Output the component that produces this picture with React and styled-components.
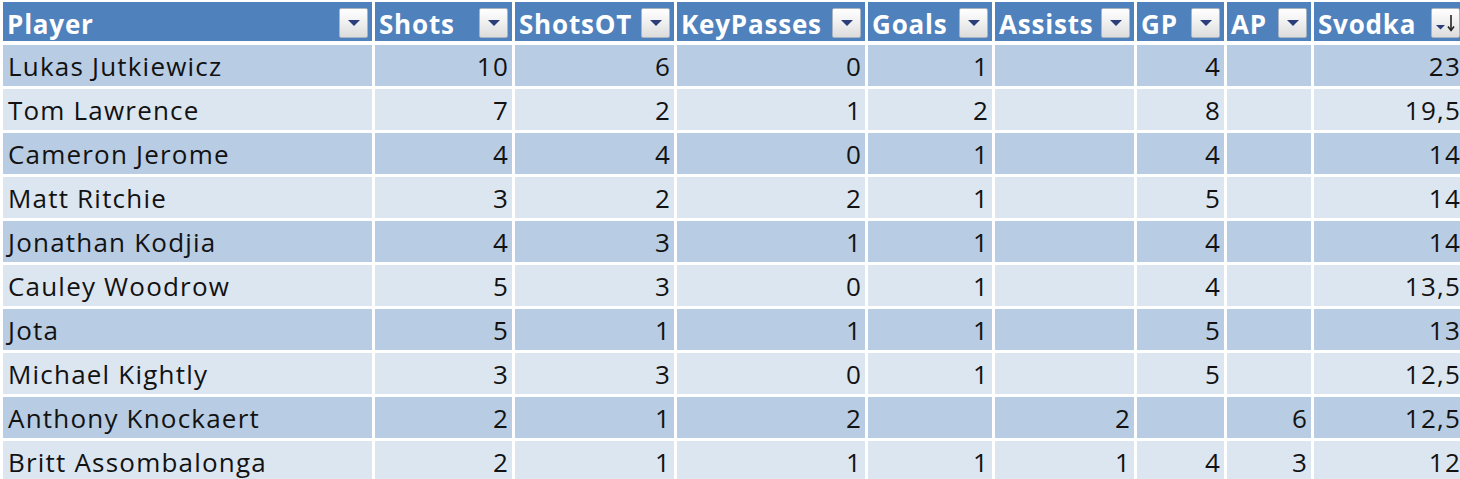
import React from "react";
import styled, { createGlobalStyle } from "styled-components";

const Global = createGlobalStyle`
  html, body { margin: 0; padding: 0; background: #ffffff; overflow: hidden; }
  body { font-family: "Open Sans", Lato, sans-serif; }
`;

const COLS = "369px 137px 159px 188px 124px 139px 87px 84px 150px";

const Table = styled.div`
  padding: 2px 0 0 3px;
  width: 1460px;
  height: 479px;
  box-sizing: border-box;
  overflow: hidden;
`;

const HeaderRow = styled.div`
  display: grid;
  grid-template-columns: ${COLS};
  column-gap: 3px;
  height: 39px;
  margin-bottom: 4px;
`;

const HeaderCell = styled.div`
  background: #4f81bd;
  color: #ffffff;
  font-weight: 700;
  font-size: 26px;
  letter-spacing: 0.8px;
  display: flex;
  align-items: center;
  justify-content: space-between;
  padding: 0 4px 0 4px;
  box-sizing: border-box;
  white-space: nowrap;
  overflow: hidden;
`;

const HeaderLabel = styled.span`
  line-height: 1;
  padding-top: 5px;
`;

const FilterButton = styled.div`
  width: 29px;
  height: 30px;
  flex: none;
  box-sizing: border-box;
  border: 1px solid #a9b4c2;
  border-radius: 2px;
  background: linear-gradient(#ffffff 0%, #f1f1f1 45%, #dcdcdc 100%);
  display: flex;
  align-items: center;
  justify-content: center;
  margin-top: 2px;
`;

const BodyRow = styled.div`
  display: grid;
  grid-template-columns: ${COLS};
  column-gap: 3px;
  height: 41px;
  margin-bottom: 3px;
`;

const Cell = styled.div`
  background: ${(p) => (p.$odd ? "#b8cce4" : "#dce6f1")};
  color: #121212;
  font-size: 26px;
  font-weight: 500;
  letter-spacing: 1.2px;
  line-height: 1.2;
  display: flex;
  align-items: center;
  justify-content: ${(p) => (p.$num ? "flex-end" : "flex-start")};
  padding: 3px ${(p) => (p.$num ? "3px" : "5px")} 0 5px;
  box-sizing: border-box;
  white-space: nowrap;
  overflow: hidden;
`;

const DropIcon = () => (
  <svg width="12" height="8" viewBox="0 0 12 8">
    <polygon points="0,1 12,1 6,7" fill="#2c3d7c" />
  </svg>
);

const SortIcon = () => (
  <svg width="22" height="20" viewBox="0 0 22 20">
    <polygon points="1,12 10,12 5.5,16.5" fill="#2c3d7c" />
    <line x1="16" y1="2" x2="16" y2="17" stroke="#222" strokeWidth="1.6" />
    <polyline points="13,13.5 16,17.5 19,13.5" fill="none" stroke="#222" strokeWidth="1.6" />
  </svg>
);

const headers = ["Player", "Shots", "ShotsOT", "KeyPasses", "Goals", "Assists", "GP", "AP", "Svodka"];

const rows = [
  ["Lukas Jutkiewicz", 10, 6, 0, 1, "", 4, "", "23"],
  ["Tom Lawrence", 7, 2, 1, 2, "", 8, "", "19,5"],
  ["Cameron Jerome", 4, 4, 0, 1, "", 4, "", "14"],
  ["Matt Ritchie", 3, 2, 2, 1, "", 5, "", "14"],
  ["Jonathan Kodjia", 4, 3, 1, 1, "", 4, "", "14"],
  ["Cauley Woodrow", 5, 3, 0, 1, "", 4, "", "13,5"],
  ["Jota", 5, 1, 1, 1, "", 5, "", "13"],
  ["Michael Kightly", 3, 3, 0, 1, "", 5, "", "12,5"],
  ["Anthony Knockaert", 2, 1, 2, "", 2, "", 6, "12,5"],
  ["Britt Assombalonga", 2, 1, 1, 1, 1, 4, 3, "12"],
];

export default function App() {
  return (
    <>
      <Global />
      <Table>
        <HeaderRow>
          {headers.map((h, i) => (
            <HeaderCell key={h}>
              <HeaderLabel>{h}</HeaderLabel>
              <FilterButton>{i === headers.length - 1 ? <SortIcon /> : <DropIcon />}</FilterButton>
            </HeaderCell>
          ))}
        </HeaderRow>
        {rows.map((r, ri) => (
          <BodyRow key={ri}>
            {r.map((v, ci) => (
              <Cell key={ci} $odd={ri % 2 === 0} $num={ci > 0}>
                {v}
              </Cell>
            ))}
          </BodyRow>
        ))}
      </Table>
    </>
  );
}
